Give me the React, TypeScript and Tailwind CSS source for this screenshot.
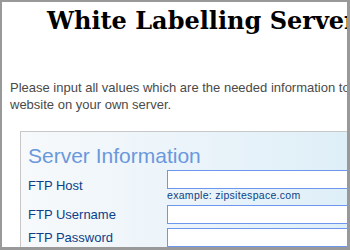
export default function App() {
  return (
    <div className="w-[350px] h-[250px] overflow-hidden bg-white border-t-2 border-l-2 border-r-[3px] border-b-[3px] border-[#999999]">
      <div className="w-[640px] px-2 font-['Liberation_Sans',Arial,sans-serif]">
        <h1 className="pl-[37px] pt-[4px] text-[24px] leading-[30px] font-bold text-black whitespace-nowrap font-['DejaVu_Serif',Georgia,serif]">
          White Labelling Server Setup
        </h1>
        <div className="mt-[43px] text-[13px] leading-[17px] text-[#4a4a4a]">
          <p className="whitespace-nowrap">Please input all values which are the needed information to setup the white label</p>
          <p className="whitespace-nowrap">website on your own server.</p>
        </div>
        <div className="mt-[18px] ml-[10px] border border-[#c8c8c8] bg-gradient-to-r from-[#f7f9fb] to-[#c9e6f5] pl-[7px] pt-[12px] pb-4">
          <h2 className="text-[21px] leading-[24px] text-[#6a98dc]">Server Information</h2>
          <div className="mt-[2px] grid grid-cols-[139px_1fr] gap-y-[3px] items-center">
            <label className="text-[13px] text-[#0b3f88]">FTP Host</label>
            <div>
              <div className="h-[19px] border border-[#6d97ee] bg-white" />
              <div className="text-[10.5px] leading-[13px] tracking-[0.3px] text-[#0b3f88]">example: zipsitespace.com</div>
            </div>
            <label className="text-[13px] text-[#0b3f88]">FTP Username</label>
            <div className="h-[19px] border border-[#6d97ee] bg-white" />
            <label className="text-[13px] text-[#0b3f88]">FTP Password</label>
            <div className="h-[19px] border border-[#6d97ee] bg-white" />
          </div>
        </div>
      </div>
    </div>
  );
}
